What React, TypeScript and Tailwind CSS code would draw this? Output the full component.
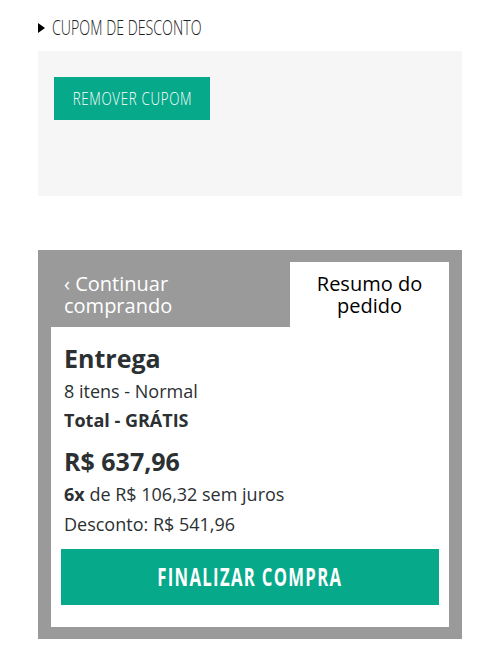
import React from 'react';

export default function App() {
  return (
    <div className="w-[500px] min-h-[659px] bg-white pt-[16px] font-['Open_Sans',sans-serif] text-[#2b3033]">
      <div className="mx-[38px]">
        {/* cupom */}
        <div className="flex items-center h-[24px]">
          <span className="w-0 h-0 border-y-[5px] border-y-transparent border-l-[7px] border-l-black mr-[7px]" />
          <span className="inline-block whitespace-nowrap origin-left scale-x-[0.71] text-[20px] font-light text-[#222]">
            CUPOM DE DESCONTO
          </span>
        </div>
        <div className="mt-[11px] h-[145px] bg-[#f6f6f6] pt-[26px] pl-[16px]">
          <button className="w-[156px] h-[43px] bg-[#07a98b] text-white flex items-center justify-center">
            <span className="inline-block whitespace-nowrap scale-x-[0.7] text-[19px] font-light tracking-[1px]">
              REMOVER CUPOM
            </span>
          </button>
        </div>

        {/* resumo */}
        <div className="mt-[54px] bg-[#9a9a9a] px-[13px] pt-[12px] pb-[12px]">
          <div className="flex h-[65px]">
            <div className="flex-1 pl-[13px] pt-[11px] text-white text-[20px] leading-[22px]">
              <div>&lsaquo; Continuar</div>
              <div>comprando</div>
            </div>
            <div className="w-[159px] bg-white pt-[11px] text-center text-black text-[20px] leading-[22px]">
              <div>Resumo do</div>
              <div>pedido</div>
            </div>
          </div>
          <div className="bg-white px-[13px] pt-[16px] pb-[22px]">
            <div className="text-[25px] font-bold leading-[30px]">Entrega</div>
            <div className="mt-[6px] text-[18px] leading-[25px]">8 itens - Normal</div>
            <div className="mt-[4px] text-[18px] font-bold leading-[25px]">Total - GRÁTIS</div>
            <div className="mt-[13px] text-[25px] font-bold leading-[30px]">R$ 637,96</div>
            <div className="mt-[6px] text-[18px] leading-[25px]">
              <span className="font-bold">6x</span> de R$ 106,32 sem juros
            </div>
            <div className="mt-[5px] text-[18px] leading-[25px]">Desconto: R$ 541,96</div>
            <button className="mt-[12px] -ml-[3px] w-[378px] h-[56px] bg-[#07a98b] text-white flex items-center justify-center">
              <span className="inline-block whitespace-nowrap scale-x-[0.667] text-[25px] font-bold tracking-[2px]">
                FINALIZAR COMPRA
              </span>
            </button>
          </div>
        </div>
      </div>
    </div>
  );
}
